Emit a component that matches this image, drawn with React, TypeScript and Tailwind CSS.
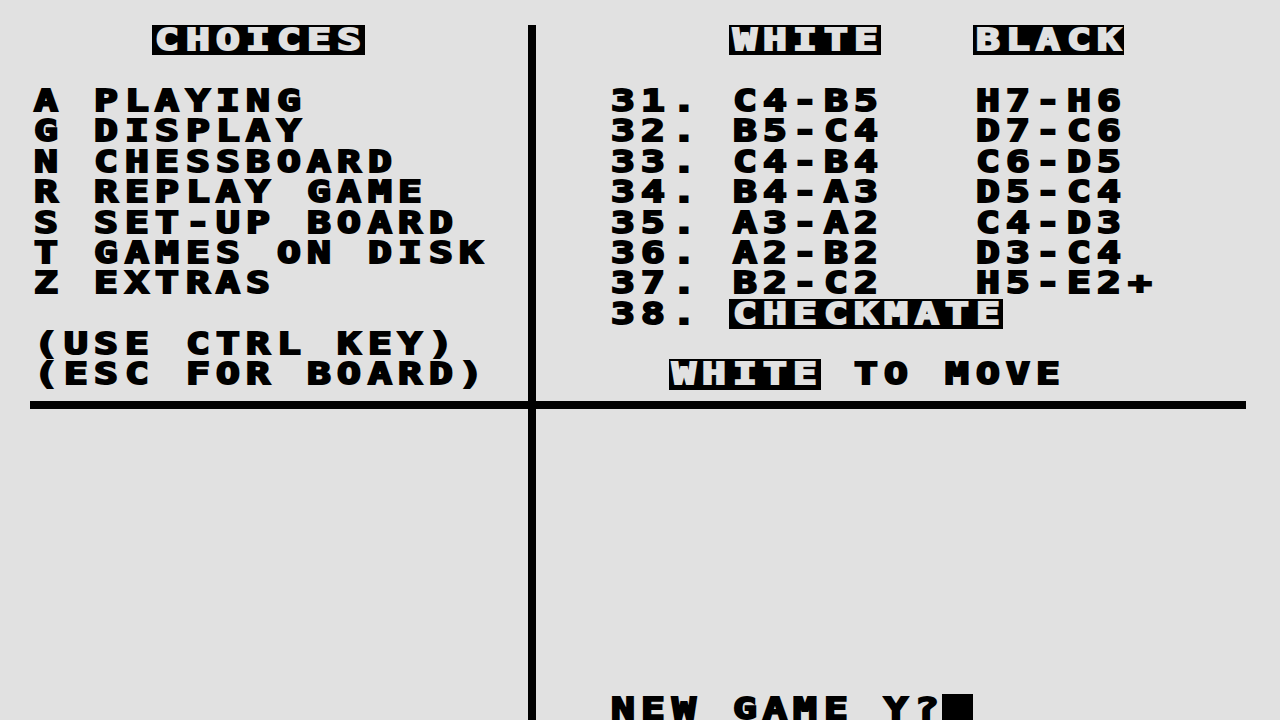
import React from "react";

const COLS = 42;
const ROWS = 24;

type Cell = { ch: string; inv: boolean };

function buildGrid(): Cell[][] {
  const g: Cell[][] = Array.from({ length: ROWS }, () =>
    Array.from({ length: COLS }, () => ({ ch: " ", inv: false }))
  );
  const put = (r: number, c: number, text: string, inv = false) => {
    for (let i = 0; i < text.length; i++) {
      g[r][c + i] = { ch: text[i], inv };
    }
  };
  put(0, 5, "CHOICES", true);
  put(0, 24, "WHITE", true);
  put(0, 32, "BLACK", true);

  const left = [
    "A PLAYING",
    "G DISPLAY",
    "N CHESSBOARD",
    "R REPLAY GAME",
    "S SET-UP BOARD",
    "T GAMES ON DISK",
    "Z EXTRAS",
  ];
  const moves: [string, string, string][] = [
    ["31.", "C4-B5", "H7-H6"],
    ["32.", "B5-C4", "D7-C6"],
    ["33.", "C4-B4", "C6-D5"],
    ["34.", "B4-A3", "D5-C4"],
    ["35.", "A3-A2", "C4-D3"],
    ["36.", "A2-B2", "D3-C4"],
    ["37.", "B2-C2", "H5-E2+"],
  ];
  left.forEach((t, i) => put(2 + i, 1, t));
  moves.forEach(([n, w, b], i) => {
    put(2 + i, 20, n);
    put(2 + i, 24, w);
    put(2 + i, 32, b);
  });
  put(9, 20, "38.");
  put(9, 24, "CHECKMATE", true);
  put(10, 1, "(USE CTRL KEY)");
  put(11, 1, "(ESC FOR BOARD)");
  put(11, 22, "WHITE", true);
  put(11, 28, "TO MOVE");
  put(22, 20, "NEW GAME Y?");
  put(22, 31, " ", true);
  return g;
}

const grid = buildGrid();

function CellView({ cell, r, c }: { cell: Cell; r: number; c: number }) {
  const vbar = c === 17;
  const hbar = r === 12 && c >= 1 && c <= 40;
  if (vbar || hbar) {
    return (
      <div className="grid h-[30.4px] w-[30.4px] shrink-0">
        {vbar && (
          <div className="col-start-1 row-start-1 flex justify-center">
            <div className="h-full w-[7.6px] bg-black" />
          </div>
        )}
        {hbar && (
          <div className="col-start-1 row-start-1 flex items-center">
            <div className="h-[7.6px] w-full bg-black" />
          </div>
        )}
      </div>
    );
  }
  return (
    <div
      className={
        cell.inv
          ? "flex h-[30.4px] w-[30.4px] shrink-0 items-center justify-center bg-black text-[#e1e1e1]"
          : "flex h-[30.4px] w-[30.4px] shrink-0 items-center justify-center text-black"
      }
    >
      {cell.ch !== " " && (
        <span className="inline-block scale-x-[1.32] leading-[26px] [-webkit-text-stroke:2px_currentColor]">
          {cell.ch}
        </span>
      )}
    </div>
  );
}

export default function App() {
  return (
    <div className="h-[720px] w-[1280px] overflow-hidden bg-[#e1e1e1] pt-[25px] font-['DejaVu_Sans_Mono',monospace] text-[30px] font-bold">
      {grid.map((row, r) => (
        <div key={r} className="flex h-[30.4px]">
          {row.map((cell, c) => (
            <CellView key={c} cell={cell} r={r} c={c} />
          ))}
        </div>
      ))}
    </div>
  );
}
